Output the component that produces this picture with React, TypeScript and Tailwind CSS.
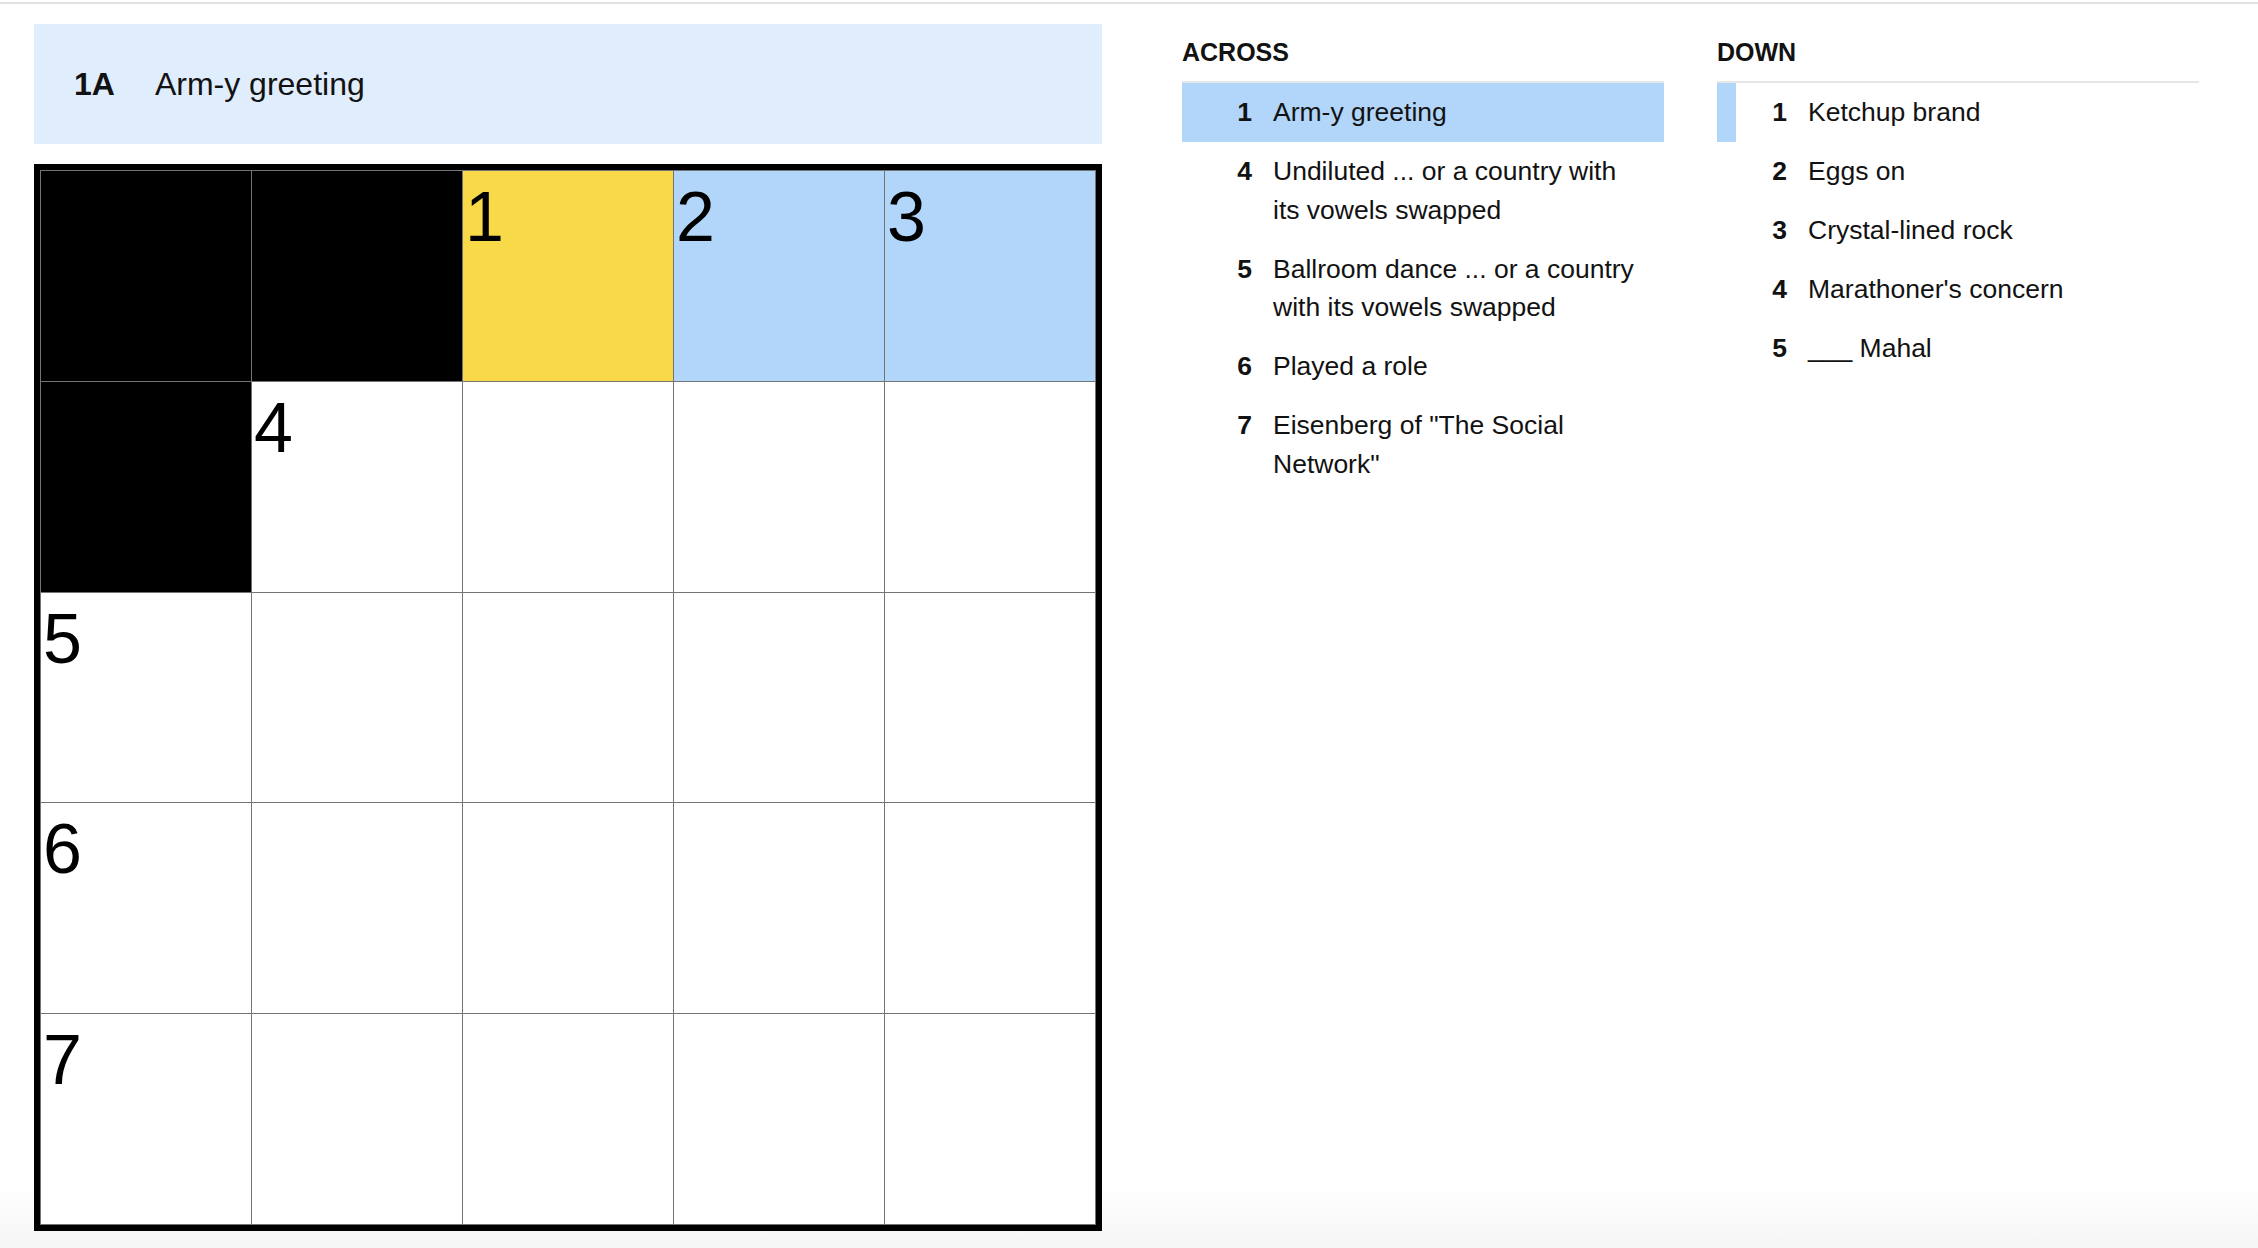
import React from "react";

type Clue = { n: number; text: string };

const across: Clue[] = [
  { n: 1, text: "Arm-y greeting" },
  { n: 4, text: "Undiluted ... or a country with its vowels swapped" },
  { n: 5, text: "Ballroom dance ... or a country with its vowels swapped" },
  { n: 6, text: "Played a role" },
  { n: 7, text: 'Eisenberg of "The Social Network"' },
];

const down: Clue[] = [
  { n: 1, text: "Ketchup brand" },
  { n: 2, text: "Eggs on" },
  { n: 3, text: "Crystal-lined rock" },
  { n: 4, text: "Marathoner's concern" },
  { n: 5, text: "___ Mahal" },
];

type Cell = { kind: "black" | "white" | "yellow" | "blue"; num?: number };

const grid: Cell[][] = [
  [{ kind: "black" }, { kind: "black" }, { kind: "yellow", num: 1 }, { kind: "blue", num: 2 }, { kind: "blue", num: 3 }],
  [{ kind: "black" }, { kind: "white", num: 4 }, { kind: "white" }, { kind: "white" }, { kind: "white" }],
  [{ kind: "white", num: 5 }, { kind: "white" }, { kind: "white" }, { kind: "white" }, { kind: "white" }],
  [{ kind: "white", num: 6 }, { kind: "white" }, { kind: "white" }, { kind: "white" }, { kind: "white" }],
  [{ kind: "white", num: 7 }, { kind: "white" }, { kind: "white" }, { kind: "white" }, { kind: "white" }],
];

const cellBg: Record<Cell["kind"], string> = {
  black: "bg-black",
  white: "bg-white",
  yellow: "bg-[#f8da48]",
  blue: "bg-[#b1d6fa]",
};

function ClueRow({ clue, mode }: { clue: Clue; mode: "none" | "full" | "strip" }) {
  const rowCls =
    mode === "full"
      ? "bg-[#b1d6fa] border-l-[19px] border-transparent"
      : mode === "strip"
      ? "border-l-[19px] border-[#b1d6fa]"
      : "border-l-[19px] border-transparent";
  return (
    <li className={`flex pt-[10px] pb-[10.5px] leading-[38.5px] text-[26.5px] text-[#121212] ${rowCls}`}>
      <span className="w-[51px] shrink-0 text-right font-bold">{clue.n}</span>
      <span className="ml-[21px] w-[368px]">{clue.text}</span>
    </li>
  );
}

function ClueList({ title, clues, selected, mode }: { title: string; clues: Clue[]; selected: number; mode: "full" | "strip" }) {
  return (
    <div className="w-[482px] shrink-0">
      <h2 className="text-[25px] leading-[29px] font-bold text-[#121212] pb-[14px] border-b-2 border-[#e6e6e6]">{title}</h2>
      <ol>
        {clues.map((c) => (
          <ClueRow key={c.n} clue={c} mode={c.n === selected ? mode : "none"} />
        ))}
      </ol>
    </div>
  );
}

export default function App() {
  return (
    <div
      className="h-screen w-full overflow-hidden bg-linear-to-b from-white from-[95%] to-[#f5f5f5]"
      style={{ fontFamily: '"Liberation Sans", Arial, sans-serif' }}
    >
      <div className="mt-[2px] h-[2px] bg-[#e2e2e2]" />
      <div className="flex pl-[34px]">
        <div className="w-[1068px] shrink-0">
          <div className="mt-[20px] h-[120px] bg-[#e0edfc] flex items-center pl-[40px] text-[32px] text-[#121212]">
            <span className="font-bold">1A</span>
            <span className="ml-[40px]">Arm-y greeting</span>
          </div>
          <div className="mt-[20px] w-[1068px] h-[1067px] border-[6px] border-black bg-[#747474] p-[1px] grid grid-cols-5 grid-rows-5 gap-[1px]">
            {grid.flat().map((cell, i) => (
              <div key={i} className={`relative ${cellBg[cell.kind]}`}>
                {cell.num !== undefined && (
                  <span className="absolute top-[11px] left-[2px] text-[70px] leading-none text-black">{cell.num}</span>
                )}
              </div>
            ))}
          </div>
        </div>
        <div className="ml-[80px] pt-[34px] flex gap-[53px]">
          <ClueList title="ACROSS" clues={across} selected={1} mode="full" />
          <ClueList title="DOWN" clues={down} selected={1} mode="strip" />
        </div>
      </div>
    </div>
  );
}
